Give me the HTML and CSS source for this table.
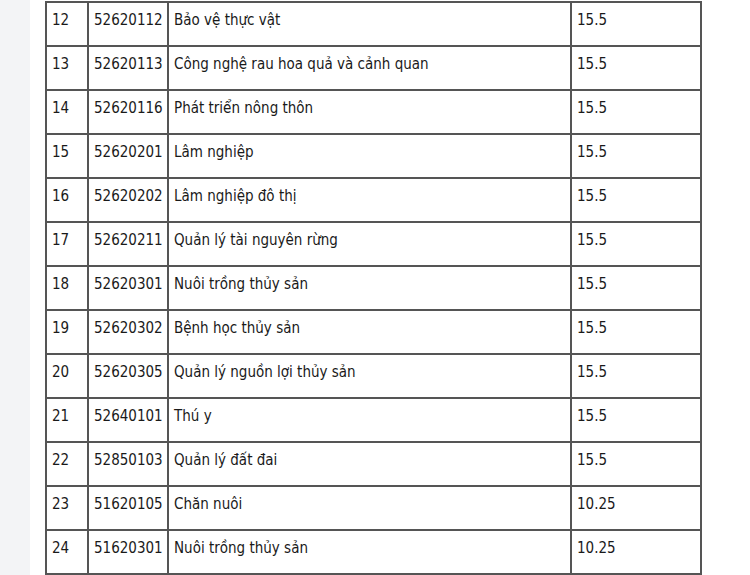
FILE: index.html
```html
<!DOCTYPE html>
<html lang="vi">
<head>
<meta charset="utf-8">
<link rel="stylesheet" href="styles.css">
</head>
<body>
<div class="page">
  <aside class="side"></aside>
  <main class="content">
    <table class="scores">
      <colgroup>
        <col class="c-no"><col class="c-code"><col class="c-name"><col class="c-score">
      </colgroup>
      <tbody>
        <tr><td>12</td><td>52620112</td><td>Bảo vệ thực vật</td><td>15.5</td></tr>
        <tr><td>13</td><td>52620113</td><td>Công nghệ rau hoa quả và cảnh quan</td><td>15.5</td></tr>
        <tr><td>14</td><td>52620116</td><td>Phát triển nông thôn</td><td>15.5</td></tr>
        <tr><td>15</td><td>52620201</td><td>Lâm nghiệp</td><td>15.5</td></tr>
        <tr><td>16</td><td>52620202</td><td>Lâm nghiệp đô thị</td><td>15.5</td></tr>
        <tr><td>17</td><td>52620211</td><td>Quản lý tài nguyên rừng</td><td>15.5</td></tr>
        <tr><td>18</td><td>52620301</td><td>Nuôi trồng thủy sản</td><td>15.5</td></tr>
        <tr><td>19</td><td>52620302</td><td>Bệnh học thủy sản</td><td>15.5</td></tr>
        <tr><td>20</td><td>52620305</td><td>Quản lý nguồn lợi thủy sản</td><td>15.5</td></tr>
        <tr><td>21</td><td>52640101</td><td>Thú y</td><td>15.5</td></tr>
        <tr><td>22</td><td>52850103</td><td>Quản lý đất đai</td><td>15.5</td></tr>
        <tr><td>23</td><td>51620105</td><td>Chăn nuôi</td><td>10.25</td></tr>
        <tr><td>24</td><td>51620301</td><td>Nuôi trồng thủy sản</td><td>10.25</td></tr>
      </tbody>
    </table>
  </main>
</div>
</body>
</html>
```
FILE: styles.css
```css
html, body {
  margin: 0;
  padding: 0;
  background: #ffffff;
}
.page {
  display: flex;
  width: 750px;
  height: 575px;
  overflow: hidden;
}
.side {
  width: 30px;
  flex: none;
  background: #f3f4f6;
}
.content {
  flex: 1;
  padding: 1px 0 0 15px;
}
.scores {
  border-collapse: collapse;
  width: 655px;
  table-layout: fixed;
  font-family: "DejaVu Sans Condensed", "DejaVu Sans", sans-serif;
  font-size: 15px;
  color: #1a1a1a;
}
.c-no { width: 42px; }
.c-code { width: 80px; }
.c-name { width: 403px; }
.c-score { width: 130px; }
.scores td {
  border: 2px solid #555555;
  padding: 7px 5px 15px;
  line-height: 20px;
  vertical-align: top;
  white-space: nowrap;
}
```
